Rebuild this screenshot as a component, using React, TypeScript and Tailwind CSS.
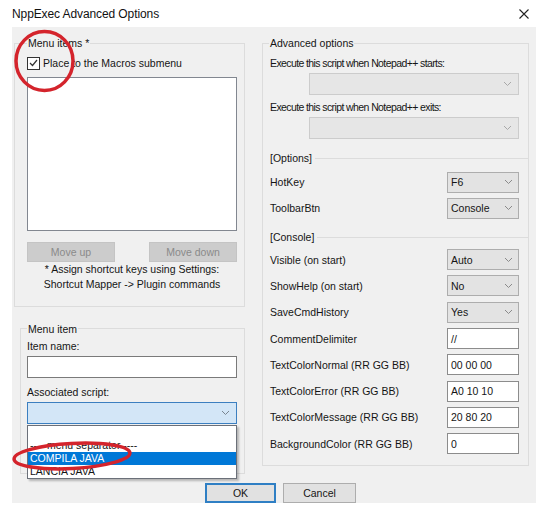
import React from "react";

const Chevron = ({ color = "#8a8a8a" }: { color?: string }) => (
  <svg width="9" height="6" viewBox="0 0 9 6" className="shrink-0">
    <path d="M1 1 L4.5 4.5 L8 1" fill="none" stroke={color} strokeWidth="1" />
  </svg>
);

const Combo = ({ value }: { value: string }) => (
  <div className="flex h-[21px] w-[72px] items-center justify-between border border-[#adadad] bg-[#e3e3e3] pl-[3px] pr-[5px]">
    <span>{value}</span>
    <Chevron />
  </div>
);

const Edit = ({ value }: { value: string }) => (
  <div className="flex h-[21px] w-[72px] items-center border border-[#8c8c8c] bg-white pl-[3px]">
    <span>{value}</span>
  </div>
);

type Row = { label: string; kind: "combo" | "edit"; value: string };

const optionRows: Row[] = [
  { label: "HotKey", kind: "combo", value: "F6" },
  { label: "ToolbarBtn", kind: "combo", value: "Console" },
];

const consoleRows: Row[] = [
  { label: "Visible (on start)", kind: "combo", value: "Auto" },
  { label: "ShowHelp (on start)", kind: "combo", value: "No" },
  { label: "SaveCmdHistory", kind: "combo", value: "Yes" },
  { label: "CommentDelimiter", kind: "edit", value: "//" },
  { label: "TextColorNormal (RR GG BB)", kind: "edit", value: "00 00 00" },
  { label: "TextColorError (RR GG BB)", kind: "edit", value: "A0 10 10" },
  { label: "TextColorMessage (RR GG BB)", kind: "edit", value: "20 80 20" },
  { label: "BackgroundColor (RR GG BB)", kind: "edit", value: "0" },
];

const SettingRow = ({ row, h }: { row: Row; h: string }) => (
  <div className={`flex items-center justify-between pl-[7px] pr-[9px] ${h}`}>
    <span>{row.label}</span>
    {row.kind === "combo" ? <Combo value={row.value} /> : <Edit value={row.value} />}
  </div>
);

const SectionHeader = ({ text, mt }: { text: string; mt: string }) => (
  <div className={`flex h-[14px] items-center pl-[7px] ${mt}`}>
    <span>{text}</span>
    <div className="ml-[3px] h-px flex-1 bg-[#dcdcdc]" />
  </div>
);

export default function App() {
  return (
    <div className="relative h-[514px] w-[548px] overflow-hidden bg-white font-['Liberation_Sans',Arial,sans-serif] text-[10.5px] leading-[14px] text-[#151515]">
      {/* Title bar */}
      <div className="flex h-[27px] items-center justify-between pl-[12px] pr-[19px]">
        <span className="text-[12px] tracking-[-0.1px] text-[#111]">NppExec Advanced Options</span>
        <svg width="10" height="10" viewBox="0 0 10 10">
          <path d="M0.5 0.5 L9.5 9.5 M9.5 0.5 L0.5 9.5" stroke="#222" strokeWidth="1.1" />
        </svg>
      </div>

      {/* Dialog body */}
      <div className="ml-[12px] flex h-[476px] w-[524px] flex-col bg-[#f0f0f0]">
        <div className="flex h-[447px]">
          {/* Left column */}
          <div className="flex w-[233px] flex-col pt-[16px]">
            {/* Menu items group */}
            <div className="ml-[2px] flex h-[264px] w-[231px] flex-col border border-[#dcdcdc] pl-[12px]">
              <div className="-mt-[8px] w-fit bg-[#f0f0f0] px-px">Menu items *</div>
              <div className="mt-[6px] flex h-[14px] items-center">
                <div className="flex h-[13px] w-[13px] items-center justify-center border border-[#333] bg-white">
                  <svg width="9" height="8" viewBox="0 0 9 8">
                    <path d="M1 4 L3.5 6.5 L8 1" fill="none" stroke="#333" strokeWidth="1.2" />
                  </svg>
                </div>
                <span className="ml-[3px]">Place to the Macros submenu</span>
              </div>
              <div className="mt-[7px] h-[154px] w-[210px] border border-[#828790] bg-white" />
              <div className="mt-[11px] flex w-[210px] justify-between">
                <div className="flex h-[20px] w-[88px] items-center justify-center border border-[#c4c4c4] bg-[#cccccc] text-[#8a8a8a]">
                  Move up
                </div>
                <div className="flex h-[20px] w-[88px] items-center justify-center border border-[#c4c4c4] bg-[#cccccc] text-[#8a8a8a]">
                  Move down
                </div>
              </div>
              <div className="w-[210px] text-center leading-[14.5px]">
                <div>* Assign shortcut keys using Settings:</div>
                <div>Shortcut Mapper -&gt; Plugin commands</div>
              </div>
            </div>

            {/* Menu item group */}
            <div className="ml-[8px] mt-[21px] flex h-[146px] w-[225px] flex-col border border-[#dcdcdc] pl-[6px]">
              <div className="-mt-[7px] w-fit bg-[#f0f0f0] px-px">Menu item</div>
              <div className="mt-[3px]">Item name:</div>
              <div className="mt-[3px] h-[22px] w-[210px] border border-[#7a7a7a] bg-white" />
              <div className="mt-[7px]">Associated script:</div>
              <div className="mt-[3px] flex h-[22px] w-[210px] items-center justify-end border border-[#3c7fc0] bg-[#d3e6f7] pr-[6px]">
                <Chevron color="#7a8590" />
              </div>
            </div>
          </div>

          {/* Right column */}
          <div className="ml-[17px] pt-[16px]">
            <div className="flex h-[423px] w-[267px] flex-col border border-[#dcdcdc]">
              <div className="-mt-[8px] ml-[6px] w-fit bg-[#f0f0f0] px-px">Advanced options</div>
              <div className="mt-[6px] pl-[7px] tracking-[-0.6px]">Execute this script when Notepad++ starts:</div>
              <div className="ml-[46px] mt-[3px] flex h-[22px] w-[210px] items-center justify-end border border-[#cccccc] bg-[#e6e6e6] pr-[6px]">
                <Chevron color="#a8a8a8" />
              </div>
              <div className="mt-[5px] pl-[7px] tracking-[-0.6px]">Execute this script when Notepad++ exits:</div>
              <div className="ml-[46px] mt-[3px] flex h-[22px] w-[210px] items-center justify-end border border-[#cccccc] bg-[#e6e6e6] pr-[6px]">
                <Chevron color="#a8a8a8" />
              </div>

              <SectionHeader text="[Options]" mt="mt-[12px]" />
              <div className="mt-[4px]">
                {optionRows.map((r) => (
                  <SettingRow key={r.label} row={r} h="h-[26px]" />
                ))}
              </div>

              <SectionHeader text="[Console]" mt="mt-[9px]" />
              <div className="mt-[2.5px]">
                {consoleRows.map((r) => (
                  <SettingRow key={r.label} row={r} h="h-[26.3px]" />
                ))}
              </div>
            </div>
          </div>
        </div>

        {/* Bottom buttons */}
        <div className="ml-[193px] mt-[9px] flex gap-[7px]">
          <div className="flex h-[20px] w-[71px] items-center justify-center border-2 border-[#2f7fc4] bg-[#e1e1e1]">
            OK
          </div>
          <div className="flex h-[20px] w-[73px] items-center justify-center border border-[#adadad] bg-[#e1e1e1]">
            Cancel
          </div>
        </div>
      </div>

      {/* Open dropdown list of the associated script combo */}
      <div className="absolute left-[27px] top-[425px] w-[210px] border border-[#6b7079] bg-white leading-[13px] shadow-[2px_2px_2px_rgba(0,0,0,0.25)]">
        <div className="h-[13px]" />
        <div className="h-[13px] pl-[2px]">---- menu separator ----</div>
        <div className="h-[13px] bg-[#0078d7] pl-[2px] text-white">COMPILA JAVA</div>
        <div className="h-[13px] pl-[2px]">LANCIA JAVA</div>
      </div>

      {/* Red hand-drawn annotations */}
      <svg className="pointer-events-none absolute left-0 top-0" width="548" height="514" viewBox="0 0 548 514">
        <ellipse cx="44.5" cy="61" rx="28.5" ry="29.5" fill="none" stroke="#d4242c" strokeWidth="3.5" />
        <ellipse cx="72" cy="456" rx="58" ry="12.5" fill="none" stroke="#d4242c" strokeWidth="3.5" transform="rotate(-3 72 456)" />
      </svg>
    </div>
  );
}
